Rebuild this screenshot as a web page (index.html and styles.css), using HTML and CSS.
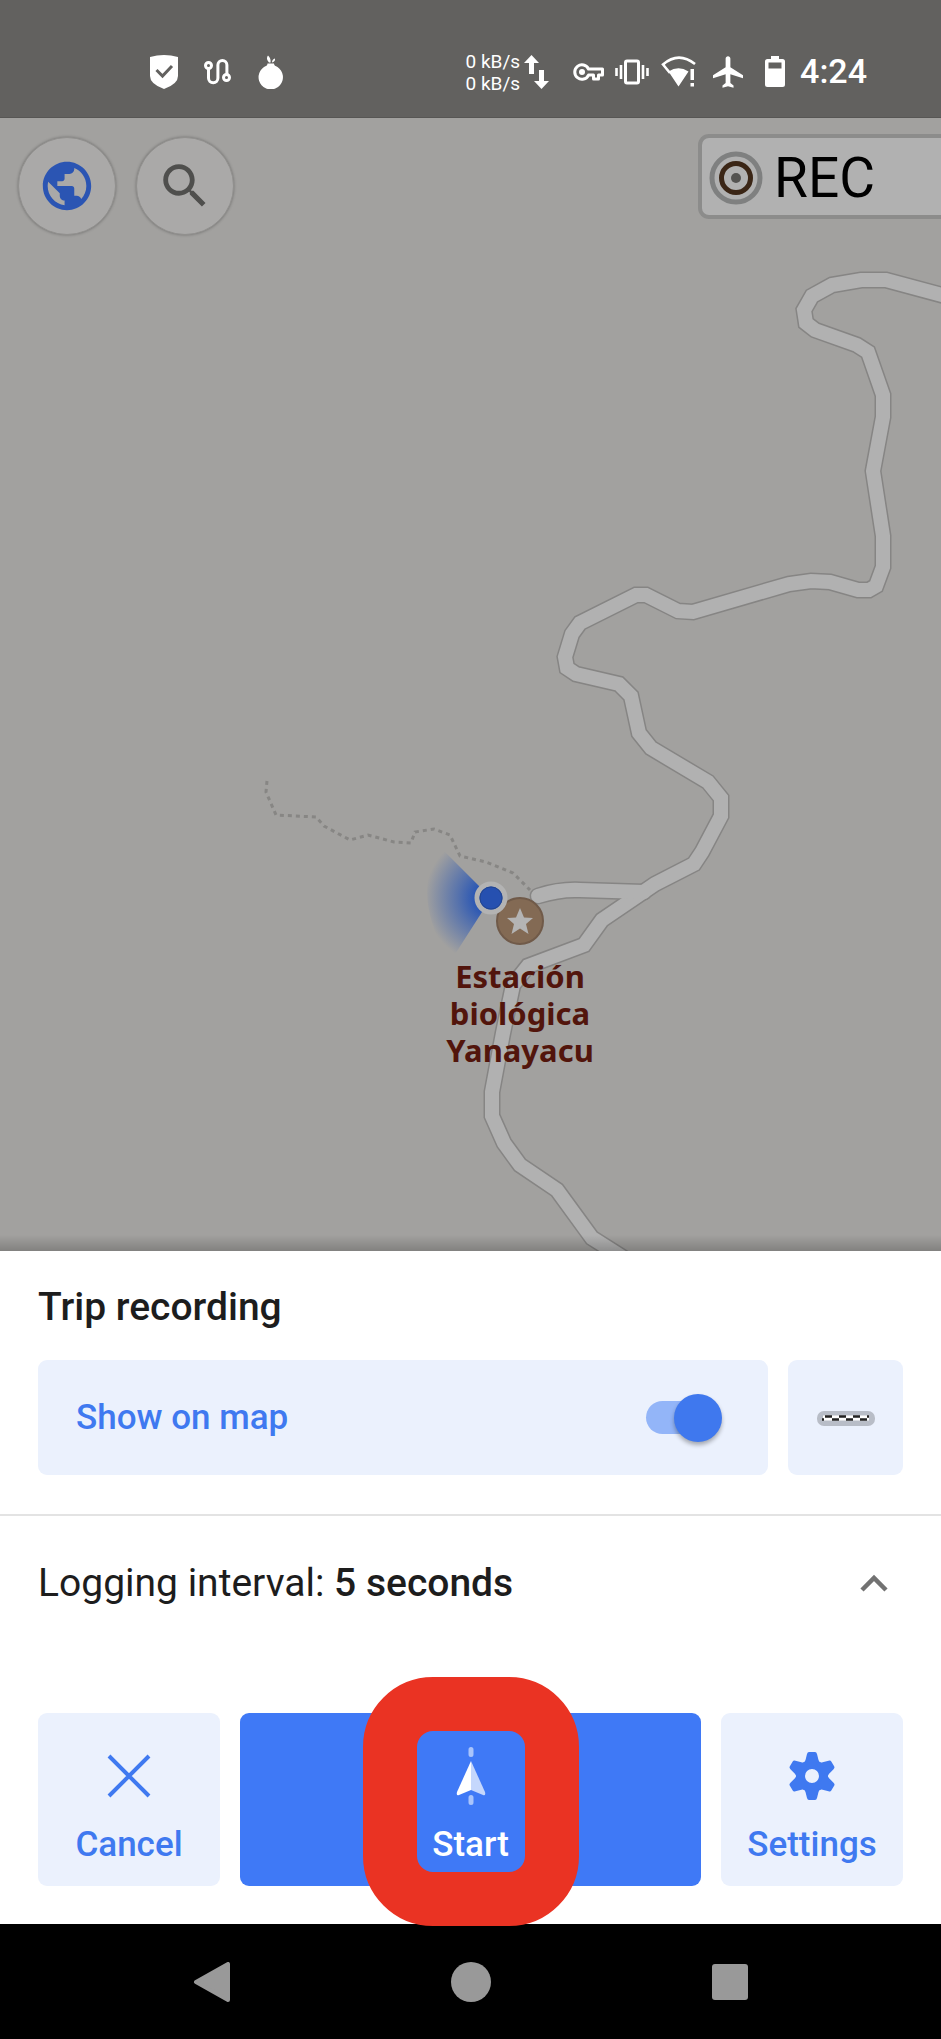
FILE: index.html
```html
<!DOCTYPE html>
<html lang="en">
  <head>
    <meta charset="UTF-8" />
    <meta name="viewport" content="width=device-width, initial-scale=1.0" />
    <title>Trip recording</title>
    <link rel="stylesheet" href="styles.css">
  </head>
  <body>
    <div class="screen">
      <header class="status-bar">
        <div class="notifications">
          <svg width="28" height="34" viewBox="0 0 28 34">
            <path fill="#fff" d="M0 2Q14-2 28 2V21Q28 29 14 34Q0 29 0 21Z" />
            <path fill="none" stroke="#62615f" stroke-width="3" d="M6.500 15l6 6L22 11" />
          </svg>
          <svg width="28" height="28" viewBox="0 0 28 28">
            <g fill="none" stroke="#fff" stroke-width="3">
              <circle cx="4.500" cy="7.500" r="3" />
              <circle cx="22.500" cy="19.500" r="3" />
              <path d="M4.500 10.500V20a4.700 4.700 0 0 0 9.400 0V7a4.500 4.500 0 0 1 9 0v9.500" />
            </g>
          </svg>
          <svg width="26" height="34" viewBox="0 0 26 34">
            <path fill="#fff" d="M9.500 8.500h6.500c0 2 1.500 2.500 3.500 3.500a12.200 12.200 0 1 1-13.500 0c2-1 3.500-1.500 3.500-3.500zM11 7.500C8.500 5 8.500 2.500 10 0.500c2 2 3 4 2.500 7zM14 7.500c0-2 1-3.500 3-4 .3 2-.7 3.500-3 4z" />
          </svg>
        </div>
        <div class="system">
          <div class="net-speed">
            <span>0 kB/s</span>
            <span>0 kB/s</span>
          </div>
          <svg class="arrows" width="25" height="34" viewBox="0 0 25 34">
            <path fill="#fff" d="M7.500 0L15 8h-5v11H5V8H0zM17.500 34L25 26h-5V15h-5v11h-5z" />
          </svg>
          <svg class="key" width="31" height="20" viewBox="0 0 31 20">
            <path fill="none" stroke="#fff" stroke-width="3" stroke-linejoin="round" d="M15.500 7A7.200 7.200 0 1 0 15.500 13H20.500v4h5v-4h4V7z" />
            <circle cx="9" cy="10" r="3" fill="#fff" />
          </svg>
          <svg class="vibrate" width="34" height="26" viewBox="0 0 34 26">
            <rect x="10.500" y="2" width="13" height="22" rx="1.500" fill="none" stroke="#fff" stroke-width="3" />
            <path stroke="#fff" stroke-width="2.600" d="M1.500 9v8M6 6v14M28 6v14M32.500 9v8" />
          </svg>
          <svg class="wifi" width="36" height="32" viewBox="0 0 36 32">
            <path fill="none" stroke="#fff" stroke-width="2.600" d="M34 8Q17.500-5 2 8.500L9 17" />
            <path fill="#fff" d="M7.500 15.500Q17.500 9 27.500 15.500L17.500 30.500zM29.500 13h3.500v11h-3.500zM29.500 27h3.500v3.500h-3.500z" />
          </svg>
          <svg class="plane" width="30" height="32" viewBox="2 2 19 20">
            <path fill="#fff" d="M21 16v-2l-8-5V3.500c0-.83-.67-1.500-1.500-1.500S10 2.670 10 3.500V9l-8 5v2l8-2.500V19l-2 1.500V22l3.500-1 3.500 1v-1.500L13 19v-5.500l8 2.500z" />
          </svg>
          <svg class="battery" width="20" height="32" viewBox="0 0 20 32">
            <path fill="#fff" d="M6 0h8v3h3.500Q20 3 20 5.500v23Q20 31 17.500 31h-15Q0 31 0 28.500v-23Q0 3 2.500 3H6zM3.500 6.500v6h13v-6z" fill-rule="evenodd" />
          </svg>
          <time class="time">4:24</time>
        </div>
      </header>

      <main class="map">
        <!-- roads are drawn on a 941 x 1133 canvas -->
        <svg class="roads" viewBox="0 118 941 1133" preserveAspectRatio="xMidYMid slice">
          <defs>
            <radialGradient id="beam" gradientUnits="userSpaceOnUse" cx="491" cy="898" r="66">
              <stop offset="0.200" stop-color="#2453b5" />
              <stop offset="0.500" stop-color="#2453b5" stop-opacity="0.600" />
              <stop offset="1" stop-color="#2453b5" stop-opacity="0" />
            </radialGradient>
            <path id="road" d="M960 300L886 280H861L832 285L812 296L804 310L806 323L815 330L857 345L868 352L883 395V417L873 471L883 536V567L876 586L869 590H858L830 582L811 581L789 584L693 612L678 611L646 595H636L580 623L572 634L565 657L567 668L576 674L619 684L631 696L639 733L651 748L708 782L721 798V816L702 852L694 864L655 884L602 920L584 945L528 966L513 985L503 1033L492 1092V1116L504 1143L520 1165L557 1190L592 1238L630 1262" />
            <path id="branch" d="M538 896Q560 889 580 890L644 892" />
          </defs>
          <g class="road-edge">
            <use href="#road" />
            <use href="#branch" />
          </g>
          <g class="road-fill">
            <use href="#road" />
            <use href="#branch" />
          </g>
          <path class="trail" d="M267 781L266 792L276 815L316 817L324 826L350 840L368 835L394 842L411 843L415 832L434 829L450 835L460 856L486 862L513 873L530 890" />
          <path fill="url(#beam)" d="M491 898L440 847Q410 895 450 962z" />
          <circle cx="520" cy="921" r="23" fill="#836a54" stroke="#705a49" stroke-width="2" />
          <path fill="#b4b4b4" d="M520 908L524 917.500L533 918L526 924L528.500 934L520 928.500L511.500 934L514 924L507 918L516 917.500z" />
          <circle cx="491" cy="898" r="14" fill="#2650b0" stroke="#b3b3b3" stroke-width="5" />
          <circle cx="491" cy="898" r="11" fill="none" stroke="#23458f" stroke-width="1" />
          <g class="place">
            <text x="520" y="988">Estación</text>
            <text x="520" y="1025">biológica</text>
            <text x="520" y="1062">Yanayacu</text>
          </g>
        </svg>

        <div class="map-controls">
          <div class="map-buttons">
            <button class="round-btn" aria-label="Configure map">
              <svg width="58" height="58" viewBox="0 0 24 24">
                <path fill="#2b55b3" d="M12 2C6.480 2 2 6.480 2 12s4.480 10 10 10 10-4.480 10-10S17.520 2 12 2zm-1 17.930c-3.950-.490-7-3.850-7-7.930 0-.620.080-1.210.210-1.790L9 15v1c0 1.100.900 2 2 2v1.930zm6.900-2.540c-.260-.810-1-1.390-1.900-1.390h-1v-3c0-.550-.450-1-1-1H8v-2h2c.550 0 1-.450 1-1V7h2c1.100 0 2-.900 2-2v-.410c2.930 1.190 5 4.060 5 7.410 0 2.080-.800 3.970-2.100 5.390z" />
              </svg>
            </button>
            <button class="round-btn" aria-label="Search">
              <svg width="58" height="58" viewBox="0 0 24 24">
                <path fill="#4f4f4d" d="M15.500 14h-.790l-.280-.270C15.410 12.590 16 11.110 16 9.500 16 5.910 13.090 3 9.500 3S3 5.910 3 9.500 5.910 16 9.500 16c1.610 0 3.090-.590 4.230-1.570l.270.280v.790l5 4.990L20.490 19l-4.990-5zm-6 0C7.010 14 5 11.990 5 9.500S7.010 5 9.500 5 14 7.010 14 9.500 11.990 14 9.500 14z" />
              </svg>
            </button>
          </div>
          <button class="rec-btn">
            <svg width="54" height="54" viewBox="0 0 54 54">
              <circle cx="27" cy="27" r="24" fill="none" stroke="#7f8080" stroke-width="5" />
              <circle cx="27" cy="27" r="14.500" fill="none" stroke="#3b2616" stroke-width="5" />
              <circle cx="27" cy="27" r="5" fill="#545351" />
            </svg>
            REC
          </button>
        </div>
      </main>

      <section class="sheet">
        <h1 class="title">Trip recording</h1>
        <div class="track-row">
          <label class="show-on-map">
            Show on map
            <input type="checkbox" class="switch" role="switch" checked />
          </label>
          <button class="appearance-btn" aria-label="Track appearance">
            <svg width="58" height="16" viewBox="0 0 58 16">
              <rect y="1" width="58" height="15" rx="7" fill="#b8bdc7" />
              <path stroke="#fff" stroke-width="5" d="M6 8h46" />
              <path stroke="#222" stroke-width="2.500" stroke-dasharray="7 7" d="M8 6.500h44" />
              <path stroke="#222" stroke-width="2.500" stroke-dasharray="7 7" d="M15 9.500h37M5 9.500h2" />
            </svg>
          </button>
        </div>

        <button class="interval" aria-expanded="true">
          <span>Logging interval: <b>5 seconds</b></span>
          <svg width="28" height="18" viewBox="0 0 28 18">
            <path fill="none" stroke="#727272" stroke-width="4.500" d="M2 16L14 4l12 12" />
          </svg>
        </button>

        <div class="actions">
          <button class="action-btn">
            <svg width="58" height="58" viewBox="0 0 58 58">
              <path stroke="#3f79f0" stroke-width="4" d="M9 9l40 40M49 9L9 49" />
            </svg>
            Cancel
          </button>
          <button class="action-btn start-btn">
            <svg width="58" height="58" viewBox="0 0 58 58">
              <path stroke="#a9c4fb" stroke-width="5" stroke-linecap="round" d="M29 2.500v5M29 50.500v5" />
              <path fill="#fff" d="M29 14L15 45Q14 49 17 48L29 43z" />
              <path fill="#c5d7fc" d="M29 14L43 45Q44 49 41 48L29 43z" />
            </svg>
            Start
            <span class="highlight"></span>
          </button>
          <button class="action-btn">
            <svg width="58" height="58" viewBox="-29 -29 58 58">
              <defs>
                <path id="tooth" d="M-5-22Q-4.500-24-3-24H3Q4.500-24 5-22L6.500-16Q7-14 9-13V-10H-9V-13Q-7-14-6.500-16z" />
              </defs>
              <circle r="11.500" fill="none" stroke="#3f79f0" stroke-width="9" />
              <g fill="#3f79f0">
                <use href="#tooth" />
                <use href="#tooth" transform="rotate(60)" />
                <use href="#tooth" transform="rotate(120)" />
                <use href="#tooth" transform="rotate(180)" />
                <use href="#tooth" transform="rotate(240)" />
                <use href="#tooth" transform="rotate(300)" />
              </g>
            </svg>
            Settings
          </button>
        </div>
      </section>

      <nav class="nav-bar">
        <button class="nav-btn" aria-label="Back">
          <svg width="40" height="40" viewBox="0 0 40 40">
            <path fill="#999" stroke="#999" stroke-width="4" stroke-linejoin="round" d="M4 20L36 2v36z" />
          </svg>
        </button>
        <button class="nav-btn" aria-label="Home">
          <svg width="40" height="40" viewBox="0 0 40 40">
            <circle cx="20" cy="20" r="20" fill="#999" />
          </svg>
        </button>
        <button class="nav-btn" aria-label="Recent apps">
          <svg width="40" height="40" viewBox="0 0 40 40">
            <rect x="2" y="2" width="36" height="36" rx="3" fill="#999" />
          </svg>
        </button>
      </nav>
    </div>
  </body>
</html>
```
FILE: styles.css
```css
* {
  margin: 0;
  padding: 0;
  box-sizing: border-box;
}

body {
  font-family: Roboto, "Liberation Sans", sans-serif;
  color: #1d1d1d;
  background-color: #fff;
}

button {
  font: inherit;
  color: inherit;
  border: none;
  background: none;
  cursor: pointer;
}

svg {
  display: block;
  flex-shrink: 0;
}

.screen {
  display: flex;
  flex-direction: column;
  min-height: 100vh;
}

/* status bar */
.status-bar {
  display: flex;
  justify-content: space-between;
  align-items: center;
  height: 118px;
  padding: 26px 74px 0 150px;
  background-color: #62615f;
  border-bottom: 1px solid #575654;
  color: #fff;
}

.notifications {
  display: flex;
  align-items: center;
  gap: 26px;
}

.system {
  display: flex;
  align-items: center;
}

.net-speed {
  display: flex;
  flex-direction: column;
  padding-top: 2px;
  font-size: 19px;
  line-height: 22px;
}

.arrows {
  margin-left: 4px;
}

.key {
  margin-left: 24px;
}

.vibrate {
  margin-left: 11px;
}

.wifi {
  margin-left: 12px;
}

.plane {
  margin-left: 16px;
}

.battery {
  margin-left: 22px;
}

.time {
  margin-left: 15px;
  font-size: 34px;
  line-height: 34px;
  padding-bottom: 2px;
  font-weight: 500;
}

/* map */
.map {
  position: relative;
  flex: 1;
  min-height: 600px;
  overflow: hidden;
  background-color: #a2a19f;
}

.map::after {
  content: "";
  position: absolute;
  left: 0;
  right: 0;
  bottom: 0;
  height: 16px;
  background: linear-gradient(transparent, rgba(0, 0, 0, 0.2));
}

.roads {
  position: absolute;
  width: 100%;
  height: 100%;
}

.road-edge {
  fill: none;
  stroke: #868584;
  stroke-width: 17;
  stroke-linecap: round;
}

.road-fill {
  fill: none;
  stroke: #b1b1b1;
  stroke-width: 14;
  stroke-linecap: round;
}

.trail {
  fill: none;
  stroke: #878684;
  stroke-width: 3;
  stroke-dasharray: 4 4;
}

.place {
  font-family: "Noto Sans", sans-serif;
  font-size: 31px;
  font-weight: 700;
  fill: #52150c;
  text-anchor: middle;
}

.map-controls {
  position: relative;
  display: flex;
  justify-content: space-between;
  align-items: flex-start;
  padding: 16px 0 0 18px;
}

.map-buttons {
  display: flex;
  gap: 20px;
  padding-top: 3px;
}

.round-btn {
  display: flex;
  align-items: center;
  justify-content: center;
  width: 98px;
  height: 98px;
  border-radius: 50%;
  border: 1px solid #91908e;
  background-color: #aaa9a8;
  box-shadow: 0 0 3px rgba(0, 0, 0, 0.3);
}

.rec-btn {
  display: flex;
  align-items: center;
  gap: 11px;
  height: 85px;
  padding: 2px 66px 0 7px;
  border: 4px solid #8c8c8b;
  border-right: none;
  border-radius: 11px 0 0 11px;
  background-color: #b1b1b1;
  font-size: 55px;
  color: #000;
}

/* bottom sheet */
.sheet {
  background-color: #fff;
}

.title {
  padding: 34px 38px 30px;
  font-size: 39px;
  line-height: 45px;
  font-weight: 500;
}

.track-row {
  display: flex;
  gap: 20px;
  padding: 0 38px 39px;
}

.show-on-map {
  flex: 1;
  display: flex;
  align-items: center;
  justify-content: space-between;
  height: 115px;
  padding: 0 46px 0 38px;
  border-radius: 9px;
  background-color: #ebf1fd;
  color: #3f79f0;
  font-size: 35px;
  font-weight: 500;
}

.switch {
  appearance: none;
  display: flex;
  align-items: center;
  position: relative;
  width: 76px;
  height: 48px;
}

.switch::before {
  content: "";
  width: 70px;
  height: 33px;
  border-radius: 17px;
  background-color: #93b5f8;
}

.switch::after {
  content: "";
  position: absolute;
  left: 0;
  width: 48px;
  height: 48px;
  border-radius: 50%;
  background-color: #3f78ee;
  box-shadow: 0 3px 4px rgba(0, 0, 0, 0.3);
}

.switch:checked::after {
  left: auto;
  right: 0;
}

.appearance-btn {
  display: flex;
  align-items: center;
  justify-content: center;
  width: 115px;
  border-radius: 9px;
  background-color: #ebf1fd;
}

.interval {
  display: flex;
  align-items: center;
  justify-content: space-between;
  width: 100%;
  height: 136px;
  padding: 0 53px 0 38px;
  border-top: 2px solid #e3e3e3;
  font-size: 39px;
  text-align: left;
}

.interval b {
  font-weight: 500;
}

.actions {
  display: flex;
  gap: 20px;
  padding: 63px 38px 38px;
}

.action-btn {
  display: flex;
  flex-direction: column;
  align-items: center;
  gap: 20px;
  width: 182px;
  height: 173px;
  padding-top: 34px;
  border-radius: 9px;
  background-color: #ebf1fd;
  color: #3f79f0;
  font-size: 35px;
  line-height: 40px;
  font-weight: 500;
}

.start-btn {
  position: relative;
  flex: 1;
  background-color: #3f79f6;
  color: #fff;
}

.highlight {
  position: absolute;
  top: -36px;
  left: 50%;
  width: 216px;
  height: 249px;
  margin-left: -108px;
  border: 54px solid #ea3323;
  border-radius: 70px;
  z-index: 1;
}

/* system navigation */
.nav-bar {
  display: flex;
  justify-content: center;
  align-items: center;
  gap: 139px;
  height: 115px;
  background-color: #000;
}

.nav-btn {
  display: flex;
  justify-content: center;
  width: 120px;
}
```
